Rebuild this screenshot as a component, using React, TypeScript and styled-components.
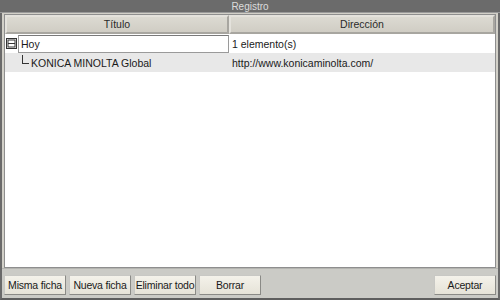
import React from 'react'
import styled, { createGlobalStyle } from 'styled-components'

const Global = createGlobalStyle`
  html, body {
    margin: 0;
    padding: 0;
    background: #5a5a5a;
  }
  * {
    box-sizing: border-box;
  }
`

const Window = styled.div`
  width: 500px;
  height: 300px;
  display: flex;
  flex-direction: column;
  background: #d2d0c8;
  border-left: 2px solid #6a6a6a;
  border-right: 2px solid #6a6a6a;
  border-bottom: 2px solid #5e5e5e;
  font-family: "Liberation Sans", Arial, sans-serif;
  font-size: 10.5px;
  color: #1a1a1a;
`

const TitleBar = styled.div`
  height: 13px;
  margin: 0 -2px;
  background: #6b6b6b;
  color: #dcdcdc;
  font-size: 10px;
  line-height: 13px;
  text-align: center;
  border-bottom: 1px solid #9a9a9a;
`

const ListPanel = styled.div`
  flex: 1;
  margin: 1px 2px 0;
  background: #ffffff;
  border: 1px solid #8e8e8e;
  display: flex;
  flex-direction: column;
`

const HeaderRow = styled.div`
  display: grid;
  grid-template-columns: 224px 1fr;
  height: 19px;
`

const HeaderCell = styled.div`
  background: linear-gradient(#dcdad2, #d0cdc4);
  border: 2px solid #a8a6a0;
  border-top-color: #e4e2dc;
  border-left-color: #e4e2dc;
  text-align: center;
  line-height: 15px;
  color: #2a2a2a;
`

const Row = styled.div<{ $shade?: boolean }>`
  display: grid;
  grid-template-columns: 224px 1fr;
  height: 19px;
  align-items: center;
  background: ${p => (p.$shade ? '#e8e8e8' : '#ffffff')};
`

const NameCell = styled.div<{ $indent?: number }>`
  display: flex;
  align-items: center;
  height: 100%;
  padding-left: ${p => p.$indent ?? 1}px;
`

const AddressCell = styled.div`
  padding-left: 3px;
`

const Toggle = styled.span`
  width: 11px;
  height: 11px;
  margin-right: 1px;
  display: flex;
  align-items: center;
  justify-content: center;
`

const NameBox = styled.div`
  flex: 1;
  height: 18px;
  line-height: 16px;
  padding-left: 2px;
  border: 1px solid #9a9a9a;
  border-top-color: #7a7a7a;
  background: #ffffff;
`

const Branch = styled.span`
  width: 7px;
  height: 9px;
  margin: -6px 2px 0 0;
  border-left: 1px solid #333;
  border-bottom: 1px solid #333;
`

const Footer = styled.div`
  height: 30px;
  display: flex;
  align-items: center;
  gap: 3px;
  padding: 2px 2px 0;
  background: #cbcbc6;
  border-top: 1px solid #b4b4b0;
`

const Button = styled.button<{ $push?: boolean }>`
  width: 62px;
  height: 20px;
  padding: 0;
  margin-left: ${p => (p.$push ? 'auto' : '0')};
  font-family: inherit;
  font-size: 10.5px;
  color: #1a1a1a;
  background: linear-gradient(#f4f2ea, #e6e3d8);
  border: 1px solid #8a8a86;
  border-top-color: #c8c8c4;
  border-left-color: #c8c8c4;
  white-space: nowrap;
  letter-spacing: -0.2px;
`

const Minus = () => (
  <svg width="11" height="11" viewBox="0 0 11 11">
    <rect x="0.5" y="0.5" width="10" height="10" fill="#fff" stroke="#333" />
    <rect x="2" y="2" width="7" height="7" fill="none" stroke="#333" strokeWidth="1" />
    <line x1="2" y1="5.5" x2="9" y2="5.5" stroke="#333" />
  </svg>
)

const App: React.FunctionComponent = () => {
  return (
    <>
      <Global />
      <Window>
        <TitleBar>Registro</TitleBar>
        <ListPanel>
          <HeaderRow>
            <HeaderCell>Título</HeaderCell>
            <HeaderCell>Dirección</HeaderCell>
          </HeaderRow>
          <Row>
            <NameCell>
              <Toggle><Minus /></Toggle>
              <NameBox>Hoy</NameBox>
            </NameCell>
            <AddressCell>1 elemento(s)</AddressCell>
          </Row>
          <Row $shade>
            <NameCell $indent={17}>
              <Branch />
              KONICA MINOLTA Global
            </NameCell>
            <AddressCell>http://www.konicaminolta.com/</AddressCell>
          </Row>
        </ListPanel>
        <Footer>
          <Button>Misma ficha</Button>
          <Button>Nueva ficha</Button>
          <Button>Eliminar todo</Button>
          <Button>Borrar</Button>
          <Button $push>Aceptar</Button>
        </Footer>
      </Window>
    </>
  )
}

export default App
